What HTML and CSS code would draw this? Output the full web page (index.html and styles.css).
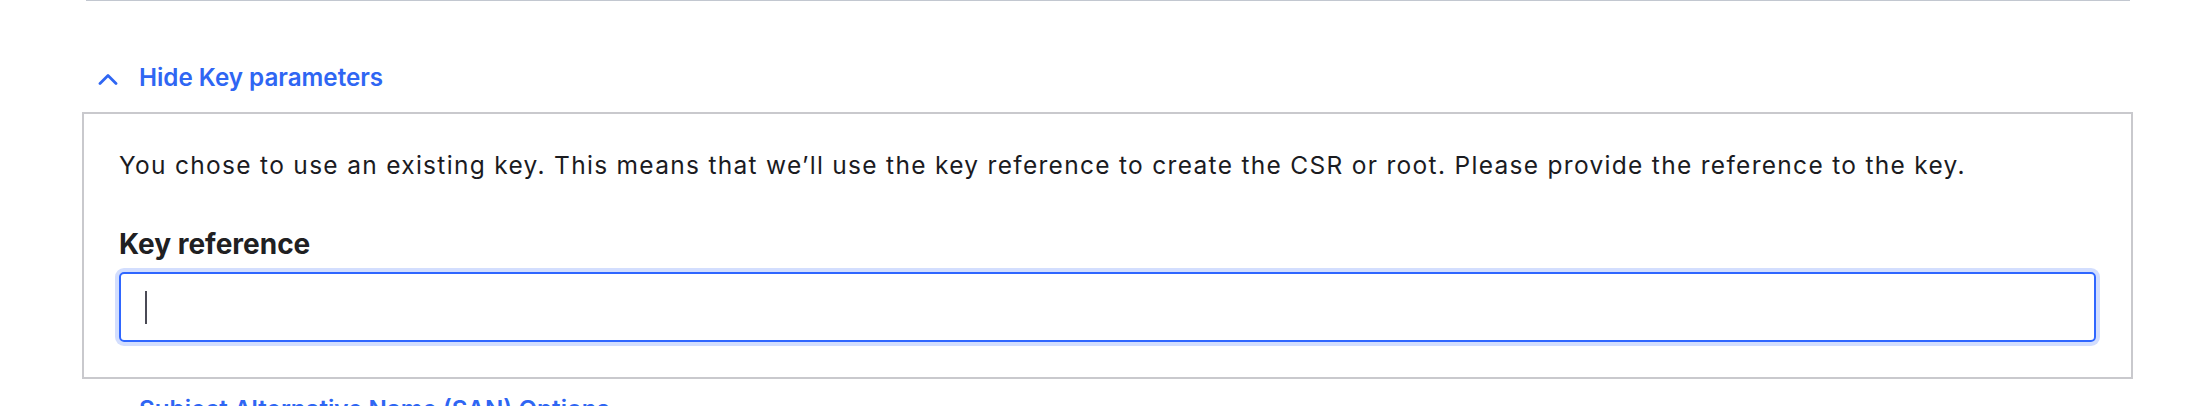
FILE: index.html
```html
<!DOCTYPE html>
<html lang="en">
<head>
<meta charset="utf-8">
<title>Key parameters</title>
<link rel="stylesheet" href="styles.css">
</head>
<body>
<div class="page">
  <div class="divider"></div>
  <button class="toggle toggle-open" type="button">
    <svg class="chevron" width="20" height="12" viewBox="0 0 20 12" aria-hidden="true"><polyline points="2,10.5 10,2.5 18,10.5" fill="none" stroke="currentColor" stroke-width="2.8" stroke-linecap="round" stroke-linejoin="round"/></svg>
    <span class="toggle-text">Hide Key parameters</span>
  </button>
  <section class="panel">
    <p class="intro">You chose to use an existing key. This means that we’ll use the key reference to create the CSR or root. Please provide the reference to the key.</p>
    <label class="field-label" for="keyref">Key reference</label>
    <div class="field-input" id="keyref" role="textbox" tabindex="0"><span class="caret"></span></div>
  </section>
  <button class="toggle toggle-next" type="button">
    <svg class="chevron" width="20" height="12" viewBox="0 0 20 12" aria-hidden="true"><polyline points="2,2.5 10,10.5 18,2.5" fill="none" stroke="currentColor" stroke-width="2.8" stroke-linecap="round" stroke-linejoin="round"/></svg>
    <span class="toggle-text">Subject Alternative Name (SAN) Options</span>
  </button>
</div>
</body>
</html>
```

FILE: styles.css
```css
* { box-sizing: border-box; }
html, body { margin: 0; padding: 0; background: #ffffff; }
body {
  font-family: Inter, "Noto Sans", "Liberation Sans", sans-serif;
  color: #1d1d21;
  width: 2190px;
  height: 406px;
  overflow: hidden;
}
.page {
  padding: 0 57px 0 82px;
  display: flex;
  flex-direction: column;
  align-items: stretch;
}
.divider {
  height: 1px;
  background: #c2c7d0;
  margin: 0 3px 0 4px;
}
.toggle {
  display: flex;
  align-items: center;
  gap: 21px;
  background: none;
  border: 0;
  padding: 0 0 0 16px;
  font-family: inherit;
  font-size: 24.2px;
  font-weight: 600;
  line-height: 32px;
  color: #2f66f3;
  cursor: pointer;
  text-align: left;
}
.toggle-open { margin-top: 61px; margin-bottom: 18px; }
.toggle-next { margin-top: 15px; }
.chevron { flex: none; display: block; position: relative; top: 1px; }
.panel {
  border: 2px solid #c9c9cd;
  padding: 35px;
  display: flex;
  flex-direction: column;
}
.intro {
  margin: 0 0 43.5px;
  font-size: 24.5px;
  line-height: 33.5px;
  font-weight: 400;
  letter-spacing: 1.3px;
  color: #1b1b1f;
}
.field-label {
  display: block;
  font-size: 28px;
  line-height: 36px;
  font-weight: 700;
  color: #202022;
  margin-bottom: 10px;
}
.field-input {
  height: 70px;
  border: 2px solid #2f66ff;
  border-radius: 5px;
  box-shadow: 0 0 0 4px #d3defe;
  display: flex;
  align-items: center;
  padding-left: 24px;
  outline: none;
}
.caret {
  display: block;
  width: 2px;
  height: 33px;
  background: #4a4a55;
}
```
